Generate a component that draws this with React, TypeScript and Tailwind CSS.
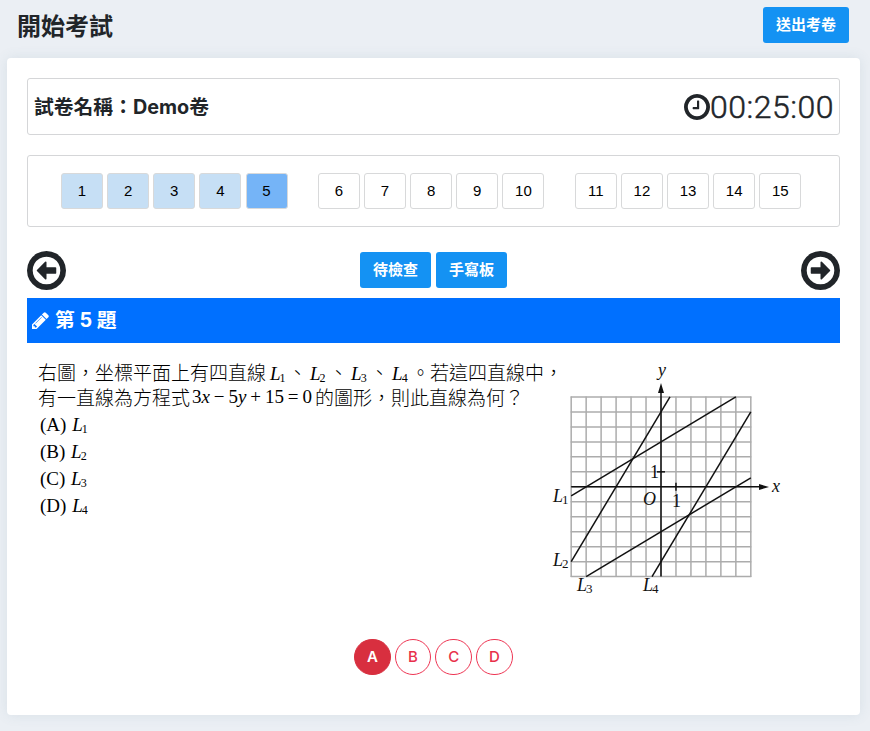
import React from "react";

const RING =
  "M1440 896q0-148-73-273t-198-198-273-73-273 73-198 198-73 273 73 273 198 198 273 73 273-73 198-198 73-273zm224 0q0 209-103 385.5t-279.5 279.5-385.5 103-385.5-103-279.5-279.5-103-385.5 103-385.5 279.5-279.5 385.5-103 385.5 103 279.5 279.5 103 385.5z";

function ArrowCircle({ right = false }: { right?: boolean }) {
  return (
    <svg viewBox="128 128 1536 1536" className={right ? "size-[39px] -scale-x-100" : "size-[39px]"} fill="currentColor">
      <path d={RING} />
      <path d="M1280 800v192q0 13-9.5 22.5t-22.5 9.5h-352v192q0 13-9.5 22.5t-22.5 9.5q-12 0-24-10l-319-320q-9-9-9-22 0-14 9-23l320-320q9-9 23-9 13 0 22.5 9.5t9.5 22.5v192h352q13 0 22.5 9.5t9.5 22.5z" />
    </svg>
  );
}

function Clock() {
  return (
    <svg viewBox="128 128 1536 1536" className="size-[26px]" fill="currentColor">
      <path d={RING} />
      <path d="M1024 544v448q0 14-9 23t-23 9h-320q-14 0-23-9t-9-23v-64q0-14 9-23t23-9h224v-352q0-14 9-23t23-9h64q14 0 23 9t9 23z" />
    </svg>
  );
}

function Pencil() {
  return (
    <svg viewBox="128 128 1536 1536" className="size-[17px]" fill="currentColor">
      <path d="M491 1536l91-91-235-235-91 91v107h128v128h107zm523-928q0-22-22-22-10 0-17 7l-542 542q-7 7-7 17 0 22 22 22 10 0 17-7l542-542q7-7 7-17zm-54-192l416 416-832 832h-416v-416zm683 96q0 53-37 90l-166 166-416-416 166-165q36-38 90-38 53 0 91 38l235 234q37 39 37 91z" />
    </svg>
  );
}

function L({ n, className = "w-[20px] pl-px" }: { n: number; className?: string }) {
  return (
    <span className={`inline-block text-black font-['Liberation_Serif',serif] ${className}`}>
      <i>L</i>
      <span className="relative top-[2px] -ml-px text-[12px] leading-none">{n}</span>
    </span>
  );
}

function BlueButton({ children, className }: { children: React.ReactNode; className: string }) {
  return (
    <button className={`flex h-9 items-center justify-center rounded-[3px] bg-[#1492f3] pt-px text-[15px] font-bold text-white ${className}`}>
      {children}
    </button>
  );
}

const GROUPS = [
  [1, 2, 3, 4, 5],
  [6, 7, 8, 9, 10],
  [11, 12, 13, 14, 15],
];

function numberColor(n: number) {
  if (n < 5) return "bg-[#c6dff5]";
  if (n === 5) return "bg-[#75b4f7]";
  return "bg-white";
}

// Graph coordinates: one unit is 15px, the origin sits at (111, 127).
const px = (x: number) => 111 + x * 14.97;
const py = (y: number) => 126.8 - y * 14.97;
const TICKS = Array.from({ length: 13 }, (_, i) => i - 6);
const LINES = [
  [-6, -0.6, 5, 6],
  [-6, -5, 0.6, 6],
  [-5, -6, 6, 0.6],
  [-0.6, -6, 6, 5],
];
const LABELS: [number, number, number][] = [
  [1, 3, 142],
  [2, 3, 206],
  [3, 27, 231],
  [4, 93, 231],
];

function Graph() {
  return (
    <svg width="240" height="240" className="overflow-visible font-['Liberation_Serif',serif]">
      <g stroke="#acacac" strokeWidth="1.5">
        {TICKS.map((t) => (
          <g key={t}>
            <line x1={px(t)} y1={py(-6) + 0.5} x2={px(t)} y2={py(6) - 0.5} />
            <line x1={px(-6) - 0.5} y1={py(t)} x2={px(6) + 0.5} y2={py(t)} />
          </g>
        ))}
      </g>
      <g stroke="#111" strokeWidth="1.5">
        <line x1={px(0)} y1={py(-6)} x2={px(0)} y2={28} />
        <line x1={px(-6)} y1={py(0)} x2={212} y2={py(0)} />
        <line x1={px(1)} y1={py(0) - 4} x2={px(1)} y2={py(0) + 4} />
        <line x1={px(0) - 4} y1={py(1)} x2={px(0) + 4} y2={py(1)} />
        {LINES.map((l, i) => (
          <line key={i} x1={px(l[0])} y1={py(l[1])} x2={px(l[2])} y2={py(l[3])} />
        ))}
      </g>
      <path d="M111 23l3 10h-6zM219 127l-10 3v-6z" fill="#111" />
      <g fill="#111" fontSize="18">
        <text x="108" y="16" fontStyle="italic">y</text>
        <text x="222" y="132" fontStyle="italic">x</text>
        <text x="93" y="145" fontStyle="italic">O</text>
        <text x="100" y="118">1</text>
        <text x="122" y="147">1</text>
        {LABELS.map(([n, x, y]) => (
          <text key={n} x={x} y={y}>
            <tspan fontStyle="italic">L</tspan>
            <tspan fontSize="13" dx="-1" dy="2">{n}</tspan>
          </text>
        ))}
      </g>
    </svg>
  );
}

export default function App() {
  return (
    <div className="flex h-[731px] w-[870px] flex-col overflow-hidden bg-[#ebeff4] font-['Liberation_Sans','Noto_Sans_CJK_TC',sans-serif] text-[#212529]">
      <header className="flex h-[58px] shrink-0 items-start justify-between pt-[7px] pr-[21px] pl-[17px]">
        <h1 className="pt-px text-2xl leading-[38px] font-bold">開始考試</h1>
        <BlueButton className="w-[86px]">送出考卷</BlueButton>
      </header>

      <main className="mr-[10px] ml-[7px] flex h-[657px] flex-col rounded-[4px] bg-white px-5 pt-5 shadow-[0_0_13px_rgba(82,125,140,0.12)]">
        <section className="flex h-[57px] shrink-0 items-center justify-between rounded-[3px] border border-[#d5d6d8] px-[6px]">
          <h2 className="pt-[2px] text-[19.8px] font-bold">試卷名稱：<span className="font-[Inter]">Demo</span>卷</h2>
          <div className="flex items-center">
            <Clock />
            <span className="w-[123px] text-[32px] leading-none font-light tracking-[0.5px] [-webkit-text-stroke:0.5px_#212529] font-[Roboto]">00:25:00</span>
          </div>
        </section>

        <section className="mt-5 flex h-[72px] shrink-0 items-center gap-[30.4px] rounded-[3px] border border-[#d5d6d8] pl-[33px]">
          {GROUPS.map((g) => (
            <div key={g[0]} className="flex gap-[4.13px]">
              {g.map((n) => (
                <button key={n} className={`h-9 w-[42px] rounded-[3px] border border-[#d8d9da] text-[15px] text-black ${numberColor(n)}`}>
                  {n}
                </button>
              ))}
            </div>
          ))}
        </section>

        <nav className="mt-[23px] flex h-10 shrink-0 items-center justify-between">
          <ArrowCircle />
          <div className="flex gap-[5px]">
            <BlueButton className="w-[71px]">待檢查</BlueButton>
            <BlueButton className="w-[71px]">手寫板</BlueButton>
          </div>
          <ArrowCircle right />
        </nav>

        <div className="mt-2 flex h-[45px] shrink-0 items-center gap-[6px] bg-[#0070ff] pl-[5px] text-white">
          <Pencil />
          <span className="text-[19.8px] font-bold font-[Inter,'Noto_Sans_CJK_TC',sans-serif]">第 5 題</span>
        </div>

        <section className="flex h-[296px] shrink-0 pt-[17px] pl-[11px]">
          <div className="-mt-px w-[512px] shrink-0 text-[19px] font-light whitespace-nowrap text-black font-['Noto_Sans_CJK_TC',sans-serif]">
            <p className="h-[25px] leading-[25px]">
              右圖，坐標平面上有四直線
              <L n={1} className="w-[22px] pl-1" />、<L n={2} className="w-[22px] pl-[3px]" />、
              <L n={3} className="w-[22px] pl-[3px]" />、<L n={4} className="w-[22px] pl-[3px]" />。若這四直線中，
            </p>
            <p className="flex h-[27px] leading-[25px]">
              有一直線為方程式
              <span className="flex w-[125px] justify-between pr-[3px] pl-[2px] font-normal font-['Liberation_Serif',serif]">
                <span>3<i>x</i></span><span>−</span><span>5<i>y</i></span><span>+</span><span>15</span><span>=</span><span>0</span>
              </span>
              的圖形，則此直線為何？
            </p>
            {["A", "B", "C", "D"].map((c, i) => (
              <p key={c} className="h-[27px] pl-[2px] leading-[27px] font-normal font-['Liberation_Serif',serif]">
                ({c}) <L n={i + 1} />
              </p>
            ))}
          </div>
          <Graph />
        </section>

        <div className="flex gap-1 pl-[327px]">
          {["A", "B", "C", "D"].map((c) => (
            <button
              key={c}
              className={`h-[36px] w-[36.7px] rounded-full border text-[15px] font-[Inter] ${
                c === "A" ? "border-[#d82f3f] bg-[#d82f3f] font-semibold text-white" : "border-[#ee3553] bg-white font-[450] text-[#e8304b]"
              }`}
            >
              {c}
            </button>
          ))}
        </div>
      </main>
    </div>
  );
}
